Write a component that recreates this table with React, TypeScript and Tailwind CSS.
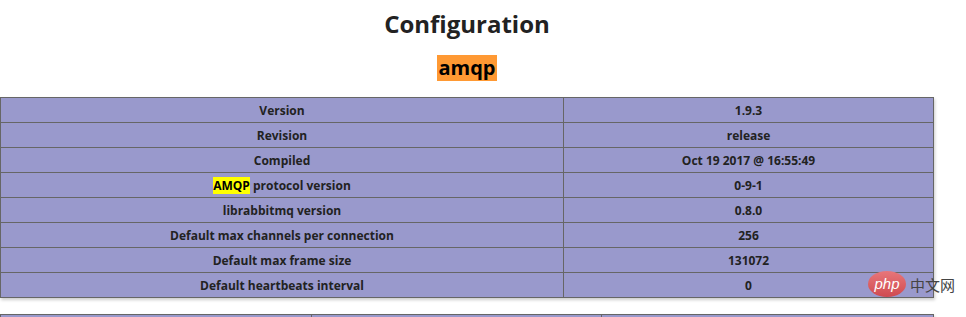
import React from 'react';

const rows: [React.ReactNode, string][] = [
  ['Version', '1.9.3'],
  ['Revision', 'release'],
  ['Compiled', 'Oct 19 2017 @ 16:55:49'],
  [
    <>
      <span className="bg-[#ffff00] text-black">AMQP</span> protocol version
    </>,
    '0-9-1',
  ],
  ['librabbitmq version', '0.8.0'],
  ['Default max channels per connection', '256'],
  ['Default max frame size', '131072'],
  ['Default heartbeats interval', '0'],
];

function PhpLogo() {
  return (
    <div className="absolute left-[868px] top-[271px] flex items-center gap-[4px]">
      <div className="w-[38px] h-[26px] rounded-[50%] bg-gradient-to-b from-[#e8767a] to-[#cf4a50] flex items-center justify-center">
        <span className="text-white italic text-[15px] leading-none font-['Liberation_Sans',sans-serif] -mt-[2px]">php</span>
      </div>
      <span className="text-[#444] text-[15px] leading-none font-['Noto_Sans_CJK_SC',sans-serif]">中文网</span>
    </div>
  );
}

export default function App() {
  return (
    <div className="relative w-[966px] h-[317px] overflow-hidden bg-white text-[#222] font-['Open_Sans','Noto_Sans',sans-serif]">
      <div className="w-[934px]">
        <div className="pt-[8px]">
          <h1 className="text-center text-[24px] leading-[32px] font-bold">Configuration</h1>
        </div>
        <div className="mt-[15px] text-center">
          <span className="inline-block bg-[#ff9933] h-[26px] leading-[26px] px-[1px] text-[20px] font-bold text-black">amqp</span>
        </div>
      </div>

      <table className="mt-[16px] w-[934px] border-collapse shadow-[1px_2px_3px_#ccc] text-[12px] font-bold">
        <tbody>
          {rows.map(([k, v], i) => (
            <tr key={i}>
              <td className="w-[563px] border border-[#666] bg-[#9999cc] px-[5px] pt-[5px] pb-[3px] leading-[16px] text-center">{k}</td>
              <td className="border border-[#666] bg-[#9999cc] px-[5px] pt-[5px] pb-[3px] leading-[16px] text-center">{v}</td>
            </tr>
          ))}
        </tbody>
      </table>

      <table className="mt-[16px] w-[934px] border-collapse shadow-[1px_2px_3px_#ccc] text-[12px] font-bold">
        <tbody>
          <tr>
            <td className="w-[311px] border border-[#666] bg-[#9999cc] h-[25px]"></td>
            <td className="w-[290px] border border-[#666] bg-[#9999cc] h-[25px]"></td>
            <td className="border border-[#666] bg-[#9999cc] h-[25px]"></td>
          </tr>
        </tbody>
      </table>

      <PhpLogo />
    </div>
  );
}
